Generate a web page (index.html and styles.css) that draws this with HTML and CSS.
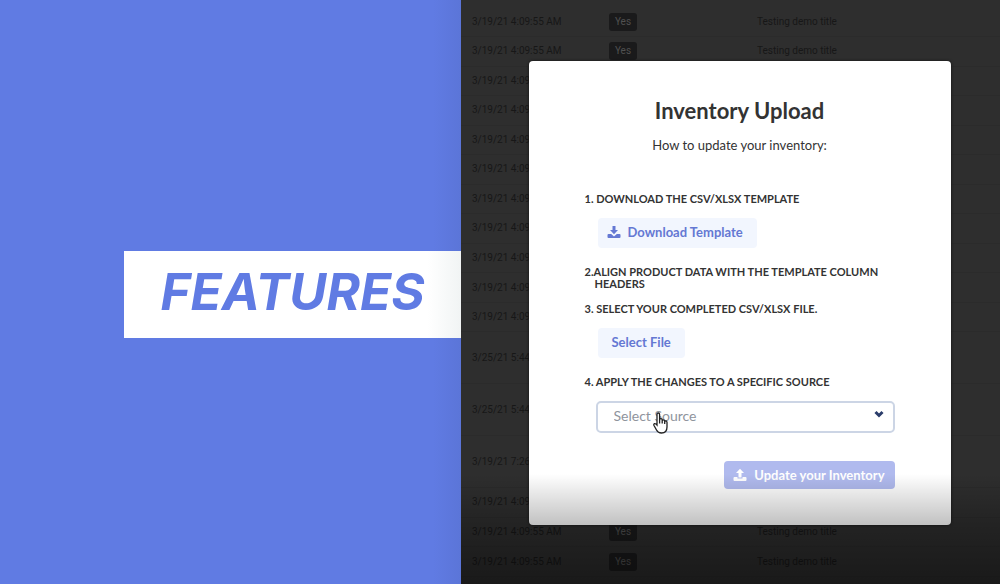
FILE: index.html
```html
<!DOCTYPE html>
<html lang="en">

<head>
    <meta charset="UTF-8">
    <meta name="viewport" content="width=device-width, initial-scale=1.0">
    <title>Inventory Upload</title>
    <link rel="stylesheet" href="styles.css">
</head>

<body>
    <div class="page">
        <section class="intro">
            <h1 class="banner">FEATURES</h1>
        </section>
        <main class="screen">
            <table class="log">
                <tbody>
                    <tr><td class="date">3/19/21 4:09:55 AM</td><td class="state"><span class="tag">Yes</span></td><td>Testing demo title</td></tr>
                    <tr><td class="date">3/19/21 4:09:55 AM</td><td class="state"><span class="tag">Yes</span></td><td>Testing demo title</td></tr>
                    <tr><td>3/19/21 4:09:</td><td></td><td></td></tr>
                    <tr><td>3/19/21 4:09:</td><td></td><td></td></tr>
                    <tr><td>3/19/21 4:09:</td><td></td><td></td></tr>
                    <tr><td>3/19/21 4:09:</td><td></td><td></td></tr>
                    <tr><td>3/19/21 4:09:</td><td></td><td></td></tr>
                    <tr><td>3/19/21 4:09:</td><td></td><td></td></tr>
                    <tr><td>3/19/21 4:09:</td><td></td><td></td></tr>
                    <tr><td>3/19/21 4:09:</td><td></td><td></td></tr>
                    <tr><td>3/19/21 4:09:</td><td></td><td></td></tr>
                    <tr class="tall"><td>3/25/21 5:44</td><td></td><td></td></tr>
                    <tr class="tall"><td>3/25/21 5:44</td><td></td><td></td></tr>
                    <tr class="tall"><td>3/19/21 7:26:</td><td></td><td></td></tr>
                    <tr><td>3/19/21 4:09:</td><td></td><td></td></tr>
                    <tr><td>3/19/21 4:09:55 AM</td><td><span class="tag">Yes</span></td><td>Testing demo title</td></tr>
                    <tr><td>3/19/21 4:09:55 AM</td><td><span class="tag">Yes</span></td><td>Testing demo title</td></tr>
                </tbody>
            </table>

            <div class="overlay">
                <form class="modal">
                    <h2 class="title">Inventory Upload</h2>
                    <p class="subtitle">How to update your inventory:</p>

                    <p class="step">1. Download the CSV/XLSX template</p>
                    <button type="button" class="btn light">
                        <svg class="icon" viewBox="0 0 14 14">
                            <path d="M5.5 1h3v4H11L7 9.2 3 5h2.500z" />
                            <path d="M1.500 9h2.700L7 11.500 9.800 9h2.700q1 0 1 1v2q0 1-1 1h-11q-1 0-1-1v-2q0-1 1-1z" />
                        </svg>
                        Download Template
                    </button>

                    <p class="step">2.Align product data with the template column headers</p>
                    <p class="step">3. Select your completed CSV/XLSX file.</p>
                    <button type="button" class="btn light file">Select File</button>

                    <label class="step" for="source">4. Apply the changes to a specific source</label>
                    <div class="field">
                        <select id="source" class="source">
                            <option>Select Source</option>
                        </select>
                        <svg class="arrow" viewBox="0 0 10 8">
                            <path d="M1.500 2l3.500 3.500L8.500 2" />
                        </svg>
                        <svg class="pointer" viewBox="0 0 16 22">
                            <path d="M4 13V2.500q0-1.500 1.300-1.500t1.300 1.500V8q0-1.300 1.300-1.300T9.200 8v1q0-1.200 1.200-1.200t1.300 1.200v1q0-1.100 1.100-1.100T14 10.200V15q0 6-5.500 6-3.500 0-5-3L1 13.500q-.6-1.500.5-1.800T4 13z" />
                            <path d="M6.600 8v3.500M9.200 9v2.500M11.700 10v2" />
                        </svg>
                    </div>

                    <button type="submit" class="btn update">
                        <svg class="icon" viewBox="0 0 14 14">
                            <path d="M7 .8L11 5H8.500v4.500h-3V5H3z" />
                            <path d="M1.500 9h3v1.500h5V9h3q1 0 1 1v2q0 1-1 1h-11q-1 0-1-1v-2q0-1 1-1z" />
                        </svg>
                        Update your Inventory
                    </button>
                </form>
            </div>
            <div class="fade"></div>
        </main>
    </div>
</body>

</html>
```
FILE: styles.css
```css
* {
    box-sizing: border-box;
}

body {
    margin: 0;
    font-family: Lato, "Liberation Sans", sans-serif;
}

.page {
    display: flex;
    min-height: 100vh;
}

.intro {
    flex: 0 0 46.1%;
    display: flex;
    align-items: center;
    justify-content: flex-end;
    padding-top: 5px;
    background: linear-gradient(to right, #607be3 94%, #5b75d8);
}

.banner {
    width: 73%;
    margin: 0;
    padding: 10px 0 15px 36px;
    background: linear-gradient(to right, #fff 90%, #f1f4f4);
    color: #607be3;
    font-family: Inter, "Liberation Sans", sans-serif;
    font-size: 51px;
    font-style: italic;
    font-weight: bold;
    line-height: 62px;
}

.screen {
    position: relative;
    flex: 1;
    display: flex;
    padding: 7px 0;
    background: #2e2e2e;
}

.log {
    width: 100%;
    border-collapse: collapse;
    table-layout: fixed;
    color: #171717;
    font-family: Roboto, "Liberation Sans", sans-serif;
    font-size: 10px;
    line-height: 14px;
}

.log td {
    height: 29px;
    padding: 0;
    border-bottom: 1px solid #2b2b2b;
    white-space: nowrap;
}

.log .tall td {
    height: 51px;
}

.log .date,
.log .state {
    width: 148px;
}

.log td:first-child {
    padding-left: 11px;
}

.tag {
    display: block;
    width: 28px;
    border-radius: 3px;
    background: #1a1a1b;
    color: #505050;
    line-height: 18px;
    text-align: center;
}

.overlay {
    position: absolute;
    inset: 0;
    display: flex;
    align-items: center;
    justify-content: center;
    padding: 2px 0 0 18px;
}

.modal {
    display: flex;
    flex-direction: column;
    align-items: flex-start;
    width: 81%;
    padding: 36px 56px;
    border-radius: 4px;
    background: #fff;
    box-shadow: 0 0 3px #111;
    color: #333;
}

.title {
    align-self: center;
    margin: 0 0 11px;
    font-size: 22px;
    line-height: 28px;
}

.subtitle {
    align-self: center;
    margin: 0 0 39px;
    font-size: 13px;
    line-height: 18px;
}

.step {
    margin: 0 0 13px;
    padding-left: 10px;
    font-size: 11px;
    font-weight: bold;
    line-height: 12px;
    text-indent: -10px;
    text-transform: uppercase;
}

.btn {
    display: flex;
    align-items: center;
    gap: 7px;
    height: 30px;
    padding: 0 10px 2px 9px;
    border: 0;
    border-radius: 4px;
    font-family: inherit;
    font-size: 13px;
    font-weight: bold;
    cursor: pointer;
}

.light {
    margin: 0 0 18px 13px;
    padding-right: 14px;
    background: #f2f6fe;
    color: #6478d3;
}

.file {
    padding-left: 14px;
}

.icon {
    width: 14px;
    height: 14px;
    fill: currentColor;
}

.field {
    position: relative;
    align-self: stretch;
    margin: 0 0 28px 11px;
}

.source {
    display: block;
    width: 100%;
    height: 32px;
    padding: 0 16px 3px;
    appearance: none;
    border: 2px solid #ccd5e5;
    border-radius: 5px;
    background: #fff;
    color: #8f949d;
    font-family: inherit;
    font-size: 14px;
}

.arrow {
    position: absolute;
    top: 9px;
    right: 11px;
    width: 10px;
    height: 8px;
    fill: none;
    stroke: #2b3d6b;
    stroke-width: 3;
    pointer-events: none;
}

.pointer {
    position: absolute;
    top: 11px;
    left: 57px;
    width: 16px;
    height: 22px;
    fill: #fff;
    stroke: #222;
    stroke-width: 1.3;
    pointer-events: none;
}

.update {
    align-self: flex-end;
    height: 28px;
    padding-bottom: 0;
    background: #b0baee;
    color: #fff;
}

/* darkens the lower edge of the screen */
.fade {
    position: absolute;
    right: 0;
    bottom: 0;
    left: 0;
    height: 110px;
    background: linear-gradient(to bottom, rgba(0, 0, 0, 0), rgba(0, 0, 0, 0.25) 48%, rgba(0, 0, 0, 0.45));
    pointer-events: none;
}
```
